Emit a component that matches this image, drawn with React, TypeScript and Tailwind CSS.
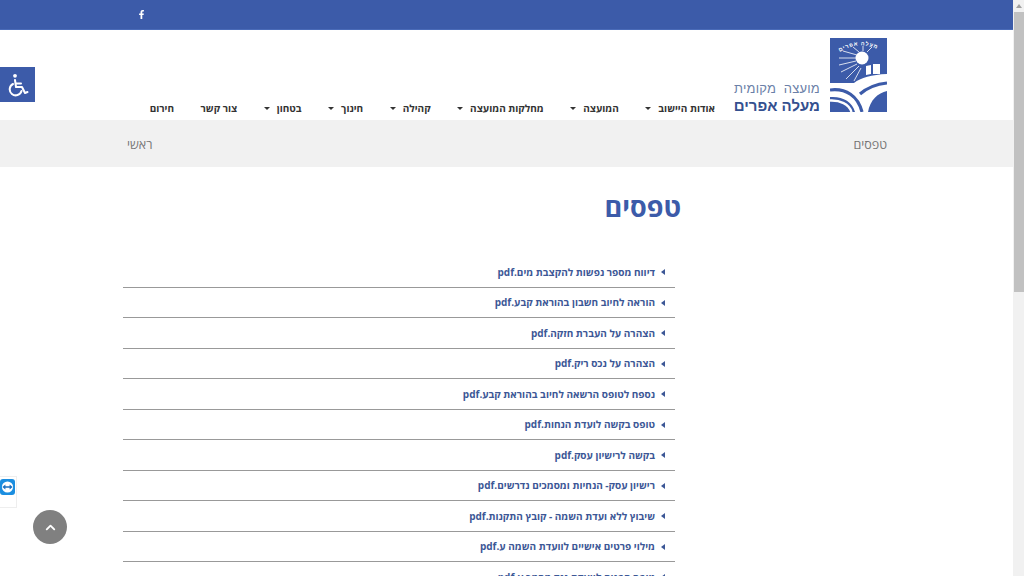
import { ChevronUp } from "lucide-react";
import { FaFacebookF } from "react-icons/fa";

const navItems = [
  { label: "אודות היישוב", caret: true },
  { label: "המועצה", caret: true },
  { label: "מחלקות המועצה", caret: true },
  { label: "קהילה", caret: true },
  { label: "חינוך", caret: true },
  { label: "בטחון", caret: true },
  { label: "צור קשר", caret: false },
  { label: "חירום", caret: false },
];

const files = [
  "דיווח מספר נפשות להקצבת מים.pdf",
  "הוראה לחיוב חשבון בהוראת קבע.pdf",
  "הצהרה על העברת חזקה.pdf",
  "הצהרה על נכס ריק.pdf",
  "נספח לטופס הרשאה לחיוב בהוראת קבע.pdf",
  "טופס בקשה לועדת הנחות.pdf",
  "בקשה לרישיון עסק.pdf",
  "רישיון עסק- הנחיות ומסמכים נדרשים.pdf",
  "שיבוץ ללא ועדת השמה - קובץ התקנות.pdf",
  "מילוי פרטים אישיים לוועדת השמה ע.pdf",
  "טופס הפניה לוועדת נגד מסמך ע.pdf",
];

function Logo() {
  return (
    <svg width="57" height="74" viewBox="0 0 57 74" className="shrink-0">
      <rect width="57" height="74" fill="#3c5ba9" />
      <defs>
        <path id="logoArc" d="M3 19 Q 28 -2 55 15" />
      </defs>
      <text fontSize="5.5" fill="#fff" fontWeight="700" letterSpacing="0.8" fontFamily="'Liberation Sans', sans-serif">
        <textPath href="#logoArc" startOffset="50%" textAnchor="middle">
          מעלה אפרים
        </textPath>
      </text>
      <g stroke="#fff" strokeWidth="0.8">
        <path d="M26 20 L9 20 M26 23 L9 27 M27 17 L13 13 M27 26 L11 34 M29 28 L16 41 M31 30 L24 43 M29 14 L23 9 M33 13 L33 8 M37 14 L42 9" />
      </g>
      <circle cx="32" cy="20" r="6.5" fill="#fff" />
      <path d="M36 37 L36 28 L41 27 L41 36 Z M43 36 L43 26 L50 26 L50 36 Z" fill="#fff" />
      <path d="M0 45 L24 45 Q 34 37 57 36 L57 74 L0 74 Z" fill="#fff" />
      <g fill="none" stroke="#3c5ba9" strokeWidth="3.2">
        <path d="M0 52 C 16 50 28 58 32 74" />
        <path d="M30 56 C 37 50 47 46 57 45" />
      </g>
      <path d="M0 59 C 12 58 22 63 25 74 L0 74 Z" fill="#3c5ba9" />
      <path d="M0 66 C 6 65 12 68 14 74 L0 74 Z" fill="#3c5ba9" />
      <path d="M0 62.5 C 10 62 19 66 21.5 74" fill="none" stroke="#fff" strokeWidth="2.4" />
      <path d="M38 74 C 40 62 48 55 57 53 L57 74 Z" fill="#3c5ba9" />
    </svg>
  );
}

function WheelchairIcon() {
  return (
    <svg width="22" height="24" viewBox="0 0 22 24" fill="none" stroke="#fff" strokeWidth="2" strokeLinecap="round" strokeLinejoin="round">
      <circle cx="8" cy="2.8" r="1.9" fill="#fff" stroke="none" />
      <path d="M8 7 L9 14 H15 L18 20 L20.5 19" />
      <path d="M9 10.5 H14" />
      <path d="M6 11 A 6 6 0 1 0 14.5 18" />
    </svg>
  );
}

function TeamViewerTab() {
  return (
    <div className="absolute left-0 top-[476px] flex h-[32px] w-[17px] justify-start border border-l-0 border-[#eeeeee] bg-white pt-[2px]">
      <svg width="15" height="16" viewBox="0 0 15 16">
        <rect width="15" height="16" rx="3" fill="#1b8ee0" />
        <circle cx="7.5" cy="8" r="5.6" fill="#fff" />
        <path d="M2.4 8 L5.4 5.6 V7.2 H9.6 V5.6 L12.6 8 L9.6 10.4 V8.8 H5.4 V10.4 Z" fill="#1b6fc0" />
      </svg>
    </div>
  );
}

export default function App() {
  return (
    <div className="relative flex h-[576px] w-[1024px] overflow-hidden bg-white font-['Open_Sans','Liberation_Sans',sans-serif]">
      <div dir="rtl" className="flex w-[1013px] flex-col">
        {/* Top bar */}
        <div className="flex h-[30px] shrink-0 items-center justify-end border-b border-[#4a6bb8] bg-[#3c5ba9] pl-[137px]">
          <FaFacebookF className="text-white" size={9} />
        </div>

        {/* Header */}
        <div className="flex h-[90px] shrink-0 items-end pr-[126px] pb-[8px]">
          <Logo />
          <div className="-mb-[1px] mr-[10px] w-[87px] shrink-0 font-['Liberation_Sans',sans-serif] leading-none">
            <div className="text-[13px] leading-[14px] tracking-[0.2px] whitespace-nowrap text-[#6b7fa8]">מועצה&nbsp; מקומית</div>
            <div className="mt-[3px] text-[15px] leading-[14px] font-bold whitespace-nowrap text-[#34508f]">מעלה אפרים</div>
          </div>
          <nav className="-mb-[4px] mr-[18px] flex items-center text-[10px] font-bold whitespace-nowrap text-[#333333]">
            {navItems.map((item) => (
              <div key={item.label} className="ml-[26.5px] flex items-center gap-[7px]">
                <span>{item.label}</span>
                {item.caret && (
                  <span className="h-0 w-0 border-x-[3px] border-t-[3px] border-x-transparent border-t-[#333333]" />
                )}
              </div>
            ))}
          </nav>
        </div>

        {/* Breadcrumb */}
        <div className="flex h-[47px] shrink-0 items-center justify-between bg-[#f1f1f1] pt-[3px] pr-[126px] pl-[127px] text-[12.5px] text-[#777777]">
          <span>טפסים</span>
          <span>ראשי</span>
        </div>

        <main className="pr-[338px] pl-[123px]">
          <h1 className="mt-[22px] -mr-[6px] text-[27px] leading-[36px] font-bold text-[#3c5ba9]">טפסים</h1>
          <ul className="mt-[32px]">
            {files.map((name) => (
              <li
                key={name}
                className="flex h-[30.5px] items-center gap-[6px] border-b border-[#999999] pt-[1px] pr-[10px] text-[10px] font-bold text-[#3c5796]"
              >
                <span className="h-0 w-0 border-y-[3px] border-r-[4px] border-y-transparent border-r-[#3c5796]" />
                <span>{name}</span>
              </li>
            ))}
          </ul>
        </main>
      </div>

      {/* Scrollbar */}
      <div className="flex w-[11px] shrink-0 flex-col items-center bg-[#f1f1f1]">
        <div className="mt-[4px] h-0 w-0 border-x-[3px] border-b-[4px] border-x-transparent border-b-[#a0a0a0]" />
        <div className="mt-[4px] h-[280px] w-[10px] bg-[#c1c1c1]" />
      </div>

      {/* Floating widgets */}
      <div className="absolute left-0 top-[67px] flex h-[35px] w-[35px] items-center justify-center bg-[#3c5ba9]">
        <WheelchairIcon />
      </div>
      <TeamViewerTab />
      <div className="absolute left-[33px] top-[510px] flex h-[34px] w-[34px] items-center justify-center rounded-full bg-[#808080] text-white">
        <ChevronUp size={15} strokeWidth={3} />
      </div>
    </div>
  );
}
